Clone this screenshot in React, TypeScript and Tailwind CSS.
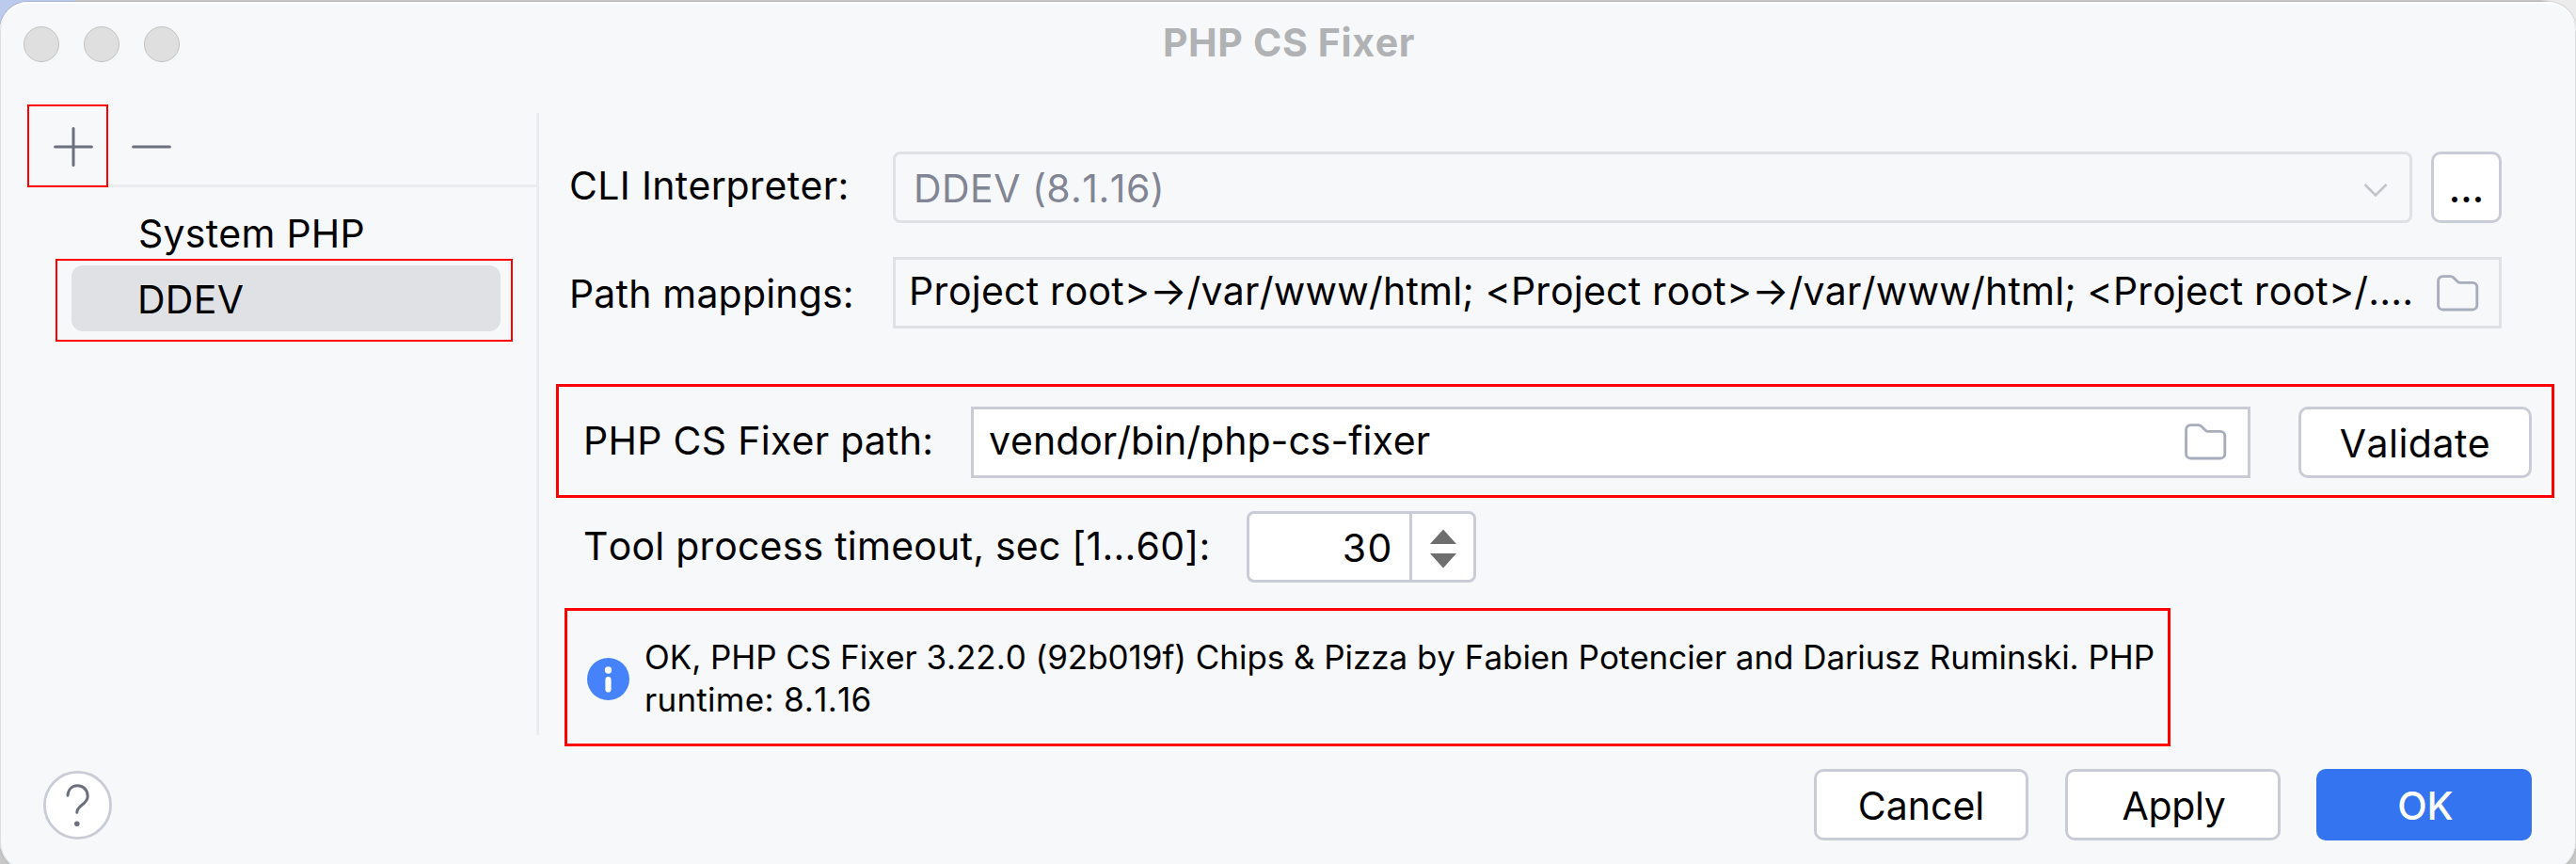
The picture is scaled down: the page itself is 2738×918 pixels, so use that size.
import type { ReactNode } from "react";

function FolderIcon() {
  return (
    <svg className="h-[39px] w-[45px] shrink-0" viewBox="0 0 45 39" fill="none">
      <path
        d="M1.6 6.4a4.8 4.8 0 0 1 4.8-4.8h8.4a4 4 0 0 1 2.8 1.15l4.6 4.5a4 4 0 0 0 2.8 1.15h13a4.8 4.8 0 0 1 4.8 4.8v19a4.8 4.8 0 0 1-4.8 4.8h-31.6a4.8 4.8 0 0 1-4.8-4.8z"
        stroke="#a8adbd"
        strokeWidth="2.9"
      />
    </svg>
  );
}

function Button({ className, children }: { className: string; children: ReactNode }) {
  return (
    <button
      className={`flex h-[76px] items-center justify-center rounded-[10px] border-[3px] border-[#c9ccd6] bg-white pt-[2px] ${className}`}
    >
      {children}
    </button>
  );
}

function TitleBar() {
  return (
    <header className="grid h-[89px] grid-cols-[1fr_auto_1fr] items-center">
      <div className="flex gap-[26px] pl-[25px]">
        <span className="size-[38px] rounded-full border border-[#c2c2c3] bg-[#dfdfdf]" />
        <span className="size-[38px] rounded-full border border-[#c2c2c3] bg-[#dfdfdf]" />
        <span className="size-[38px] rounded-full border border-[#c2c2c3] bg-[#dfdfdf]" />
      </div>
      <h1 className="pb-[4px] pl-[2px] font-bold tracking-[0.65px] text-[#b1b2b4]">PHP CS Fixer</h1>
    </header>
  );
}

function Sidebar() {
  return (
    <aside className="w-[573px] border-r-[3px] border-[#ebecf0]">
      <div className="ml-[32px] flex h-[79px] items-center gap-[41px] border-b-[3px] border-[#ebecf0] pb-[4px] pl-[25px]">
        <button className="relative">
          <svg className="h-[42px] w-[42px]" viewBox="0 0 42 42">
            <path d="M1.6 21h38.8M21 1.6v38.8" stroke="#6c707e" strokeWidth="3" strokeLinecap="round" />
          </svg>
          <span className="absolute -left-[28px] -top-[24px] h-[88px] w-[86px] border-2 border-[#ff0000]" />
        </button>
        <button>
          <svg className="h-[42px] w-[42px]" viewBox="0 0 42 42">
            <path d="M1.6 21h38.8" stroke="#6c707e" strokeWidth="3" strokeLinecap="round" />
          </svg>
        </button>
      </div>
      <ul className="mt-[13px] pl-[76px] pr-[38px]">
        <li className="flex h-[70px] items-center pl-[71px] pt-[2px] tracking-[0.24px]">System PHP</li>
        <li className="relative flex h-[70px] items-center rounded-[12px] bg-[#dfe1e5] pl-[70px] pt-[2px] tracking-[0.28px]">
          DDEV
          <span className="absolute -left-[17px] -top-[7px] h-[88px] w-[486px] border-2 border-[#ff0000]" />
        </li>
      </ul>
    </aside>
  );
}

function Settings() {
  return (
    <section className="flex-1 pt-[41px]">
      <div className="flex h-[76px] items-center pl-[32px]">
        <label className="w-[344px] pb-[4px] tracking-[0.31px]">CLI Interpreter:</label>
        <div className="flex h-[76px] w-[1615px] items-center justify-between rounded-[8px] border-[3px] border-[#dfe1e5] pl-[19px] pr-[22px] pt-[2px] tracking-[0.45px] text-[#818594]">
          DDEV (8.1.16)
          <svg className="mt-[4px] h-[16px] w-[28px]" viewBox="0 0 28 16" fill="none">
            <path d="M2.5 2 14 13.5 25.5 2" stroke="#c2c4c8" strokeWidth="2.6" />
          </svg>
        </div>
        <Button className="ml-[20px] w-[75px] font-medium">...</Button>
      </div>

      <div className="mt-[36px] flex h-[76px] items-center pl-[32px]">
        <label className="w-[344px] pt-[1px] tracking-[0.18px]">Path mappings:</label>
        <div className="flex h-[76px] w-[1710px] items-center justify-between whitespace-nowrap border-[3px] border-[#dfe1e5] pl-[14px] pr-[21px]">
          <span className="pb-[5px] tracking-[0.21px]">
            {"Project root>→/var/www/html; <Project root>→/var/www/html; <Project root>/...."}
          </span>
          <FolderIcon />
        </div>
      </div>

      <div className="ml-[18px] mt-[59px] flex h-[121px] w-[2124px] items-center border-[3px] border-[#ff0000] pl-[26px]">
        <label className="w-[412px] pb-[2px] tracking-[0.29px]">PHP CS Fixer path:</label>
        <div className="mt-[2px] flex h-[76px] w-[1360px] items-center justify-between border-[3px] border-[#c9ccd6] bg-white pl-[16px] pr-[22px]">
          <span className="pb-[4px]">vendor/bin/php-cs-fixer</span>
          <FolderIcon />
        </div>
        <Button className="ml-[51px] mt-[2px] w-[248px] tracking-[0.46px]">Validate</Button>
      </div>

      <div className="mt-[14px] flex h-[76px] items-center pl-[47px]">
        <label className="w-[705px] pb-[3px] tracking-[0.22px]">Tool process timeout, sec [1...60]:</label>
        <div className="flex h-[76px] w-[244px] rounded-[8px] border-[3px] border-[#c9ccd6] bg-white">
          <span className="flex w-[173px] items-center justify-end border-r-[3px] border-[#c9ccd6] pr-[17px] pt-[2px] tracking-[1.5px]">
            30
          </span>
          <span className="flex flex-1 items-center justify-center pt-[3px]">
            <svg className="h-[42px] w-[28px]" viewBox="0 0 28 42" fill="#6e6e6e">
              <path d="M14 .5 28 16H0zM14 41.5 28 26H0z" />
            </svg>
          </span>
        </div>
      </div>

      <div className="ml-[27px] mt-[27px] flex h-[147px] w-[1707px] items-center border-[3px] border-[#ff0000] pl-[21px] pt-[3px]">
        <svg className="h-[45px] w-[45px] shrink-0" viewBox="0 0 45 45">
          <circle cx="22.5" cy="22.5" r="22.5" fill="#4682fa" />
          <circle cx="22.5" cy="13" r="3.7" fill="#fff" />
          <rect x="19.4" y="20" width="6.2" height="16.6" rx="3.1" fill="#fff" />
        </svg>
        <p className="ml-[16px] whitespace-nowrap text-[35px] leading-[44.6px]">
          <span className="tracking-[-0.05px]">
            OK, PHP CS Fixer 3.22.0 (92b019f) Chips &amp; Pizza by Fabien Potencier and Dariusz Ruminski. PHP
          </span>
          <br />
          <span className="tracking-[0.27px]">runtime: 8.1.16</span>
        </p>
      </div>
    </section>
  );
}

function Footer() {
  return (
    <footer className="mt-[36px] flex h-[76px] items-center pl-[46px] pr-[47px]">
      <button>
        <svg className="h-[73px] w-[73px]" viewBox="0 0 73 73" fill="none">
          <circle cx="36.5" cy="36.5" r="35.1" fill="#fff" stroke="#c9ccd6" strokeWidth="2.8" />
          <path
            d="M26 26.2C26.4 19.6 30.8 15.8 36.6 15.8 42.6 15.8 47.2 20.2 47.2 27 47.2 36 35.8 36.4 35.8 44.2"
            stroke="#6c707e"
            strokeWidth="3"
            strokeLinecap="round"
          />
          <circle cx="35.8" cy="56.3" r="2.8" fill="#6c707e" />
        </svg>
      </button>
      <Button className="ml-auto w-[228px]">Cancel</Button>
      <Button className="ml-[39px] w-[229px] pl-[2px] tracking-[-0.3px]">Apply</Button>
      <button className="ml-[38px] flex h-[76px] w-[229px] items-center justify-center rounded-[10px] bg-[#3574f0] pl-[3px] pt-[2px] font-medium text-white">
        OK
      </button>
    </footer>
  );
}

export default function App() {
  return (
    <div className="h-[918px] w-[2738px] overflow-hidden bg-[linear-gradient(180deg,transparent_50%,#c8c8c8_50%),linear-gradient(90deg,#bccbed_80px,#cacaca_80px,#cacaca_2700px,#ececec_2710px)] pt-[2px] font-['Inter',sans-serif] text-[41px] leading-[50px] text-black [font-kerning:none]">
      <div className="h-[923px] rounded-[30px] bg-[#f7f8fa] shadow-[inset_0_2px_0_#ffffff,inset_0_0_0_1px_#dcdde0,0_0_2px_#00000055]">
        <TitleBar />
        <main className="mt-[29px] flex h-[661px]">
          <Sidebar />
          <Settings />
        </main>
        <Footer />
      </div>
    </div>
  );
}
